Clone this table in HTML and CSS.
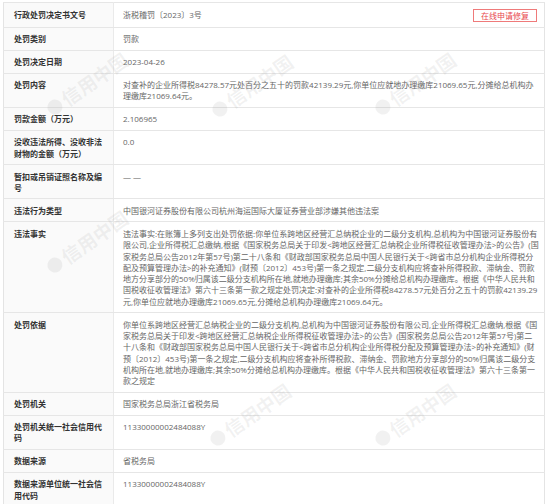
FILE: index.html
```html
<!DOCTYPE html>
<html lang="zh-CN">
<head>
<meta charset="utf-8">
<link rel="stylesheet" href="styles.css">
</head>
<body>
<div class="page">
  <table class="info">
    <tr>
      <th>行政处罚决定书文号</th>
      <td><div class="first"><span>浙税稽罚〔2023〕3号</span><a class="repair">在线申请修复</a></div></td>
    </tr>
    <tr><th>处罚类别</th><td>罚款</td></tr>
    <tr><th>处罚决定日期</th><td>2023-04-26</td></tr>
    <tr><th>处罚内容</th><td class="long">对查补的企业所得税84278.57元处百分之五十的罚款42139.29元,你单位应就地办理缴库21069.65元,分摊给总机构办<br>理缴库21069.64元。</td></tr>
    <tr><th>罚款金额（万元）</th><td>2.106965</td></tr>
    <tr><th>没收违法所得、没收非法<br>财物的金额（万元）</th><td>0.0</td></tr>
    <tr><th>暂扣或吊销证照名称及编<br>号</th><td>— —</td></tr>
    <tr><th>违法行为类型</th><td>中国银河证券股份有限公司杭州海运国际大厦证券营业部涉嫌其他违法案</td></tr>
    <tr><th>违法事实</th><td class="long">违法事实:在账簿上多列支出处罚依据:你单位系跨地区经营汇总纳税企业的二级分支机构,总机构为中国银河证券股份有<br>限公司,企业所得税汇总缴纳,根据《国家税务总局关于印发&lt;跨地区经营汇总纳税企业所得税征收管理办法&gt;的公告》(国<br>家税务总局公告2012年第57号)第二十八条和《财政部国家税务总局中国人民银行关于&lt;跨省市总分机构企业所得税分<br>配及预算管理办法&gt;的补充通知》(财预〔2012〕453号)第一条之规定,二级分支机构应将查补所得税款、滞纳金、罚款<br>地方分享部分的50%归属该二级分支机构所在地,就地办理缴库;其余50%分摊给总机构办理缴库。根据《中华人民共和<br>国税收征收管理法》第六十三条第一款之规定处罚决定:对查补的企业所得税84278.57元处百分之五十的罚款42139.29<br>元,你单位应就地办理缴库21069.65元,分摊给总机构办理缴库21069.64元。</td></tr>
    <tr><th>处罚依据</th><td class="long">你单位系跨地区经营汇总纳税企业的二级分支机构,总机构为中国银河证券股份有限公司,企业所得税汇总缴纳,根据《国<br>家税务总局关于印发&lt;跨地区经营汇总纳税企业所得税征收管理办法&gt;的公告》(国家税务总局公告2012年第57号)第二<br>十八条和《财政部国家税务总局中国人民银行关于&lt;跨省市总分机构企业所得税分配及预算管理办法&gt;的补充通知》(财<br>预〔2012〕453号)第一条之规定,二级分支机构应将查补所得税款、滞纳金、罚款地方分享部分的50%归属该二级分支<br>机构所在地,就地办理缴库;其余50%分摊给总机构办理缴库。根据《中华人民共和国税收征收管理法》第六十三条第一<br>款之规定</td></tr>
    <tr><th>处罚机关</th><td>国家税务总局浙江省税务局</td></tr>
    <tr><th>处罚机关统一社会信用代<br>码</th><td>11330000002484088Y</td></tr>
    <tr><th>数据来源</th><td>省税务局</td></tr>
    <tr><th>数据来源单位统一社会信<br>用代码</th><td>11330000002484088Y</td></tr>
  </table>
  <div class="wm wm1"><span class="wm-logo"></span>信用中国</div>
  <div class="wm wm2"><span class="wm-logo"></span>信用中国</div>
  <div class="wm wm3"><span class="wm-logo"></span>信用中国</div>
  <div class="wm wm4"><span class="wm-logo"></span>信用中国</div>
  <div class="wm wm5"><span class="wm-logo"></span>信用中国</div>
  <div class="wm wm6"><span class="wm-logo"></span>信用中国</div>
</div>
</body>
</html>
```
FILE: styles.css
```css
html, body {
  margin: 0;
  padding: 0;
  background: #ffffff;
}
.page {
  position: relative;
  padding: 2px 0 0 3px;
  width: 550px;
  height: 504px;
  box-sizing: border-box;
  overflow: hidden;
  font-family: "Open Sans", "Noto Sans CJK SC", sans-serif;
  font-size: 8px;
  line-height: 11.3px;
}
.info {
  width: 542px;
  border-collapse: collapse;
  border: 1px solid #e4e4e4;
  table-layout: fixed;
}
.info th, .info td {
  border-top: 1px solid #e6e6e6;
  border-bottom: 1px solid #e6e6e6;
  padding: 5.5px 8px 5.2px 10px;
  vertical-align: top;
  text-align: left;
}
.info th {
  width: 91px;
  background: #fafafa;
  border-right: 1px solid #eaeaea;
  color: #333333;
  font-weight: bold;
}
.info td {
  color: #666666;
  font-weight: normal;
  padding-left: 9px;
}
.info td.long {
  white-space: nowrap;
}
.first {
  display: flex;
  justify-content: space-between;
  align-items: center;
}
.repair {
  border: 1px solid #ef7a7a;
  color: #e8484d;
  padding: 0 7px;
  line-height: 11px;
  margin-right: -1px;
}
.wm {
  position: absolute;
  display: flex;
  align-items: center;
  gap: 3px;
  color: rgba(150, 150, 150, 0.13);
  font-family: "Noto Sans CJK SC", sans-serif;
  font-size: 19px;
  line-height: 20px;
  font-weight: bold;
  transform: rotate(-35deg);
  transform-origin: center;
  pointer-events: none;
  white-space: nowrap;
}
.wm-logo {
  width: 15px;
  height: 15px;
  border-radius: 50%;
  background: rgba(150, 150, 150, 0.13);
}
.wm1 { left: 40px; top: 74px; }
.wm2 { left: 205px; top: 76px; }
.wm3 { left: 368px; top: 74px; }
.wm4 { left: 40px; top: 232px; }
.wm5 { left: 203px; top: 405px; }
.wm6 { left: 368px; top: 405px; }
```
